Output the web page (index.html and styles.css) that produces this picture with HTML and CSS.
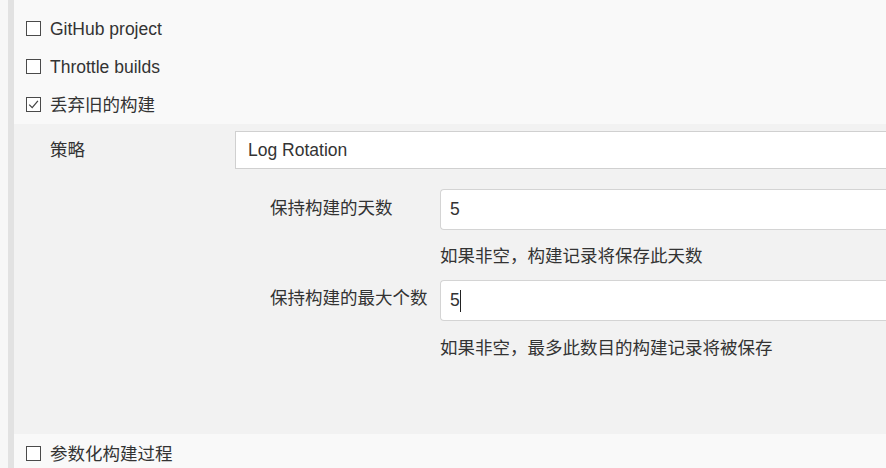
FILE: index.html
```html
<!DOCTYPE html>
<html lang="zh-CN">
<head>
<meta charset="utf-8">
<title>Job config</title>
<link rel="stylesheet" href="styles.css">
</head>
<body>
<div class="page">
  <div class="edge"></div>
  <div class="bar"></div>
  <main class="main">
    <div class="opts">
      <label class="opt"><span class="box"></span><span>GitHub project</span></label>
      <label class="opt"><span class="box"></span><span>Throttle builds</span></label>
      <label class="opt"><span class="box"><svg viewBox="0 0 13 13" width="13" height="13"><path d="M2.2 6.6 L5.2 9.6 L10.9 2.8" fill="none" stroke="#444" stroke-width="1.3"/></svg></span><span>丢弃旧的构建</span></label>
    </div>
    <section class="group">
      <div class="strategy">
        <div class="strategy-label">策略</div>
        <div class="select">Log Rotation</div>
      </div>
      <div class="nested">
        <div class="field-label">保持构建的天数</div>
        <div class="input">5</div>
        <div class="help">如果非空，构建记录将保存此天数</div>
        <div class="field-label second">保持构建的最大个数</div>
        <div class="input second">5<span class="caret"></span></div>
        <div class="help last">如果非空，最多此数目的构建记录将被保存</div>
      </div>
    </section>
    <div class="opts bottom">
      <label class="opt"><span class="box"></span><span>参数化构建过程</span></label>
    </div>
  </main>
</div>
</body>
</html>
```

FILE: styles.css
```css
html, body {
  margin: 0;
  padding: 0;
  height: 100%;
  overflow: hidden;
}
body {
  background: #f9f9f9;
  color: #333;
  font-family: "Liberation Sans", "Noto Sans CJK SC", Arial, sans-serif;
  font-size: 17.5px;
}
.page {
  display: flex;
  height: 468px;
}
.edge {
  width: 8px;
  flex: none;
  background: #f7f7f7;
}
.bar {
  width: 6px;
  flex: none;
  background: #e2e2e2;
}
.main {
  flex: 1;
  min-width: 0;
  background: #f9f9f9;
  overflow: hidden;
}
.opts {
  padding-top: 9px;
  padding-left: 12px;
  padding-bottom: 1px;
}
.opts.bottom {
  padding-top: 0;
}
.opt {
  display: flex;
  align-items: center;
  height: 38px;
  gap: 9px;
  line-height: 22px;
}
.opt > span:last-child {
  position: relative;
  top: 1px;
}
.box {
  width: 13px;
  height: 13px;
  border: 1px solid #4a4a4a;
  background: #fff;
  flex: none;
  display: flex;
  align-items: center;
  justify-content: center;
}
.box svg {
  display: block;
}
.group {
  background: #f2f2f2;
  height: 310px;
  padding-top: 7px;
  box-sizing: border-box;
}
.strategy {
  display: flex;
  align-items: center;
  height: 38px;
}
.strategy-label {
  padding-left: 36px;
  flex: none;
  box-sizing: border-box;
  width: 221px;
  line-height: 22px;
}
.select {
  flex: 1;
  height: 38px;
  box-sizing: border-box;
  background: #fff;
  border: 1px solid #d0d0d0;
  border-right: none;
  padding-left: 12px;
  padding-top: 1px;
  display: flex;
  align-items: center;
}
.nested {
  display: grid;
  grid-template-columns: 170px 1fr;
  margin-left: 256px;
  margin-top: 20px;
}
.field-label {
  padding-top: 8px;
  line-height: 22px;
  white-space: nowrap;
}
.field-label.second {
  padding-top: 7px;
  grid-column: 1;
}
.input {
  height: 41px;
  box-sizing: border-box;
  background: #fff;
  border: 1px solid #d4d4d4;
  border-right: none;
  border-radius: 4px 0 0 4px;
  padding-left: 9px;
  display: flex;
  align-items: center;
}
.caret {
  display: inline-block;
  width: 1px;
  height: 22px;
  background: #222;
}
.help {
  grid-column: 2;
  padding-top: 15px;
  padding-bottom: 13px;
  line-height: 22px;
  white-space: nowrap;
}
.help.last {
  padding-top: 16px;
}
```
